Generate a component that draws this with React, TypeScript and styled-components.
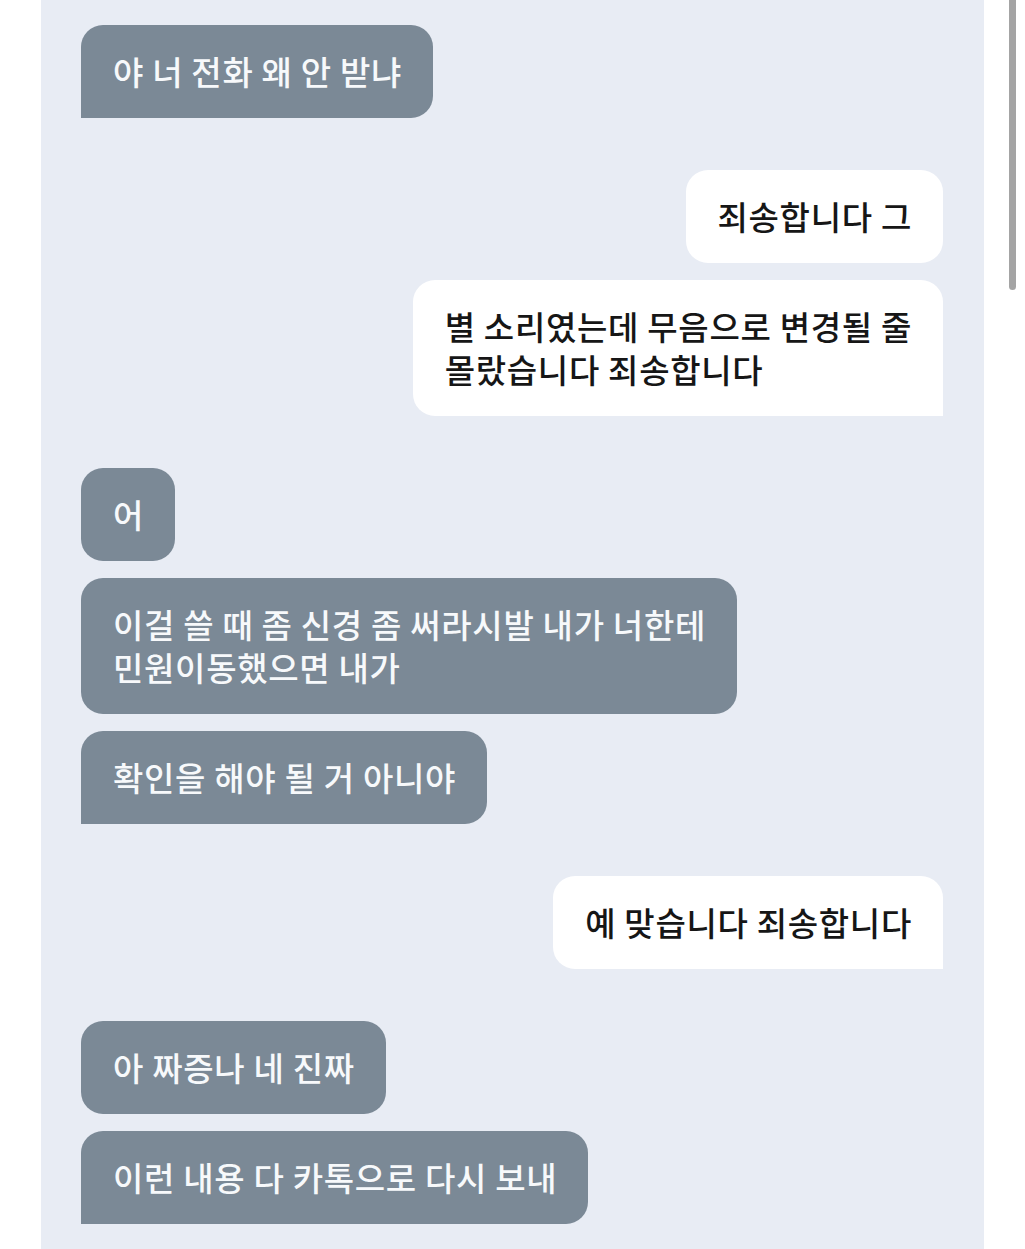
import styled, { createGlobalStyle, css } from 'styled-components'

const GlobalStyle = createGlobalStyle`
  html, body {
    margin: 0;
    padding: 0;
    background: #ffffff;
  }
  body {
    font-family: "Noto Sans CJK KR", "Noto Sans", sans-serif;
  }
`

const Screen = styled.div`
  display: flex;
  height: 1249px;
  overflow: hidden;
  padding-left: 41px;
  background: #ffffff;
`

const ChatPanel = styled.main`
  width: 943px;
  flex-shrink: 0;
  background: #e8ecf4;
  padding: 25px 41px 0 40px;
  box-sizing: border-box;
  display: flex;
  flex-direction: column;
  gap: 52px;
`

const ScrollGutter = styled.div`
  padding-left: 25px;
`

const ScrollThumb = styled.div`
  width: 7px;
  height: 290px;
  background: #a4a4a4;
  border-radius: 0 0 4px 4px;
`

const Group = styled.section<{ $mine?: boolean }>`
  display: flex;
  flex-direction: column;
  align-items: ${(p) => (p.$mine ? 'flex-end' : 'flex-start')};
  gap: 17px;
`

const Bubble = styled.div<{ $mine?: boolean; $last?: boolean }>`
  padding: 25px 31px 25px 32px;
  border-radius: 22px;
  font-size: 33px;
  font-weight: 500;
  line-height: 43px;
  letter-spacing: 0.7px;
  white-space: nowrap;
  ${(p) =>
    p.$mine
      ? css`
          background: #ffffff;
          color: #161616;
          ${p.$last && 'border-bottom-right-radius: 0;'}
        `
      : css`
          background: #7b8996;
          color: #f7f9fb;
          ${p.$last && 'border-bottom-left-radius: 0;'}
        `}
`

const Line = styled.div`
  display: block;
`

type Message = { lines: string[] }
type Thread = { mine: boolean; messages: Message[] }

const threads: Thread[] = [
  { mine: false, messages: [{ lines: ['야 너 전화 왜 안 받냐'] }] },
  {
    mine: true,
    messages: [
      { lines: ['죄송합니다 그'] },
      { lines: ['별 소리였는데 무음으로 변경될 줄', '몰랐습니다 죄송합니다'] },
    ],
  },
  {
    mine: false,
    messages: [
      { lines: ['어'] },
      { lines: ['이걸 쓸 때 좀 신경 좀 써라시발 내가 너한테', '민원이동했으면 내가'] },
      { lines: ['확인을 해야 될 거 아니야'] },
    ],
  },
  { mine: true, messages: [{ lines: ['예 맞습니다 죄송합니다'] }] },
  {
    mine: false,
    messages: [{ lines: ['아 짜증나 네 진짜'] }, { lines: ['이런 내용 다 카톡으로 다시 보내'] }],
  },
]

const App = () => {
  return (
    <>
      <GlobalStyle />
      <Screen>
        <ChatPanel>
          {threads.map((t, i) => (
            <Group key={i} $mine={t.mine}>
              {t.messages.map((m, j) => (
                <Bubble key={j} $mine={t.mine} $last={j === t.messages.length - 1}>
                  {m.lines.map((line, k) => (
                    <Line key={k}>{line}</Line>
                  ))}
                </Bubble>
              ))}
            </Group>
          ))}
        </ChatPanel>
        <ScrollGutter>
          <ScrollThumb />
        </ScrollGutter>
      </Screen>
    </>
  )
}

export default App
